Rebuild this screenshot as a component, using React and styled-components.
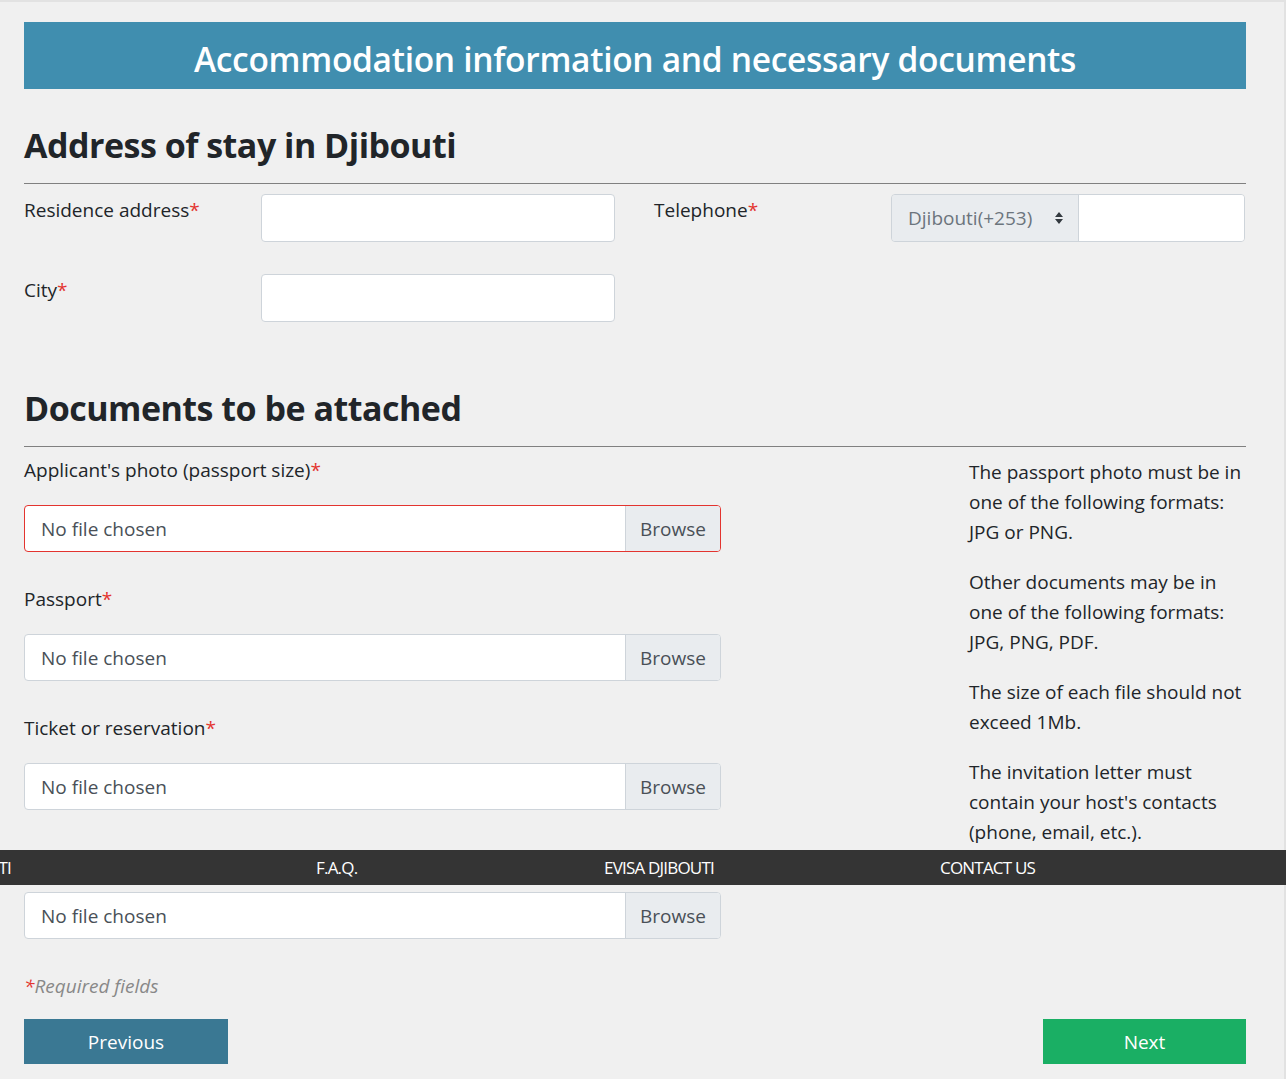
import React from "react";
import styled, { createGlobalStyle } from "styled-components";

const Global = createGlobalStyle`
  html, body { margin: 0; background: #f0f0f0; }
  body { font-family: "Open Sans", "Noto Sans", sans-serif; color: #212529; }
  * { box-sizing: border-box; }
`;

const Frame = styled.div`
  border-top: 2px solid #e2e2e2;
  border-right: 2px solid #e2e2e2;
  min-height: 1079px;
`;

const Page = styled.div`
  width: 1222px;
  margin-left: 24px;
  padding-top: 20px;
  padding-bottom: 18px;
`;

const Banner = styled.h1`
  margin: 0;
  height: 67px;
  background: #408eaf;
  color: #fff;
  font-size: 33.5px;
  font-weight: 600;
  display: flex;
  align-items: center;
  justify-content: center;
  letter-spacing: -0.3px;
  padding-top: 6px;
`;

const SectionTitle = styled.h2`
  margin: ${({ $top }) => $top}px 0 0;
  font-size: 34px;
  font-weight: 700;
  padding-bottom: 15px;
  border-bottom: 1px solid #808080;
  letter-spacing: -0.5px;
`;

const AddressGrid = styled.div`
  display: grid;
  grid-template-columns: 237px 354px 39px 237px 354px;
  row-gap: 32px;
  padding-top: 10px;
`;

const Label = styled.label`
  font-size: 19px;
  padding-top: ${({ $plain }) => ($plain ? 0 : 3)}px;
`;

const Star = styled.span`
  color: #e3342f;
`;

const TextInput = styled.div`
  height: 48px;
  background: #fff;
  border: 1px solid #ced4da;
  border-radius: 4px;
`;

const PhoneGroup = styled.div`
  display: flex;
  height: 48px;
  border: 1px solid #ced4da;
  border-radius: 4px;
  overflow: hidden;
`;

const CountrySelect = styled.div`
  width: 187px;
  background: #e9ecef;
  color: #6c757d;
  font-size: 19px;
  display: flex;
  align-items: center;
  justify-content: space-between;
  padding: 0 14px 0 16px;
  border-right: 1px solid #ced4da;
`;

const PhoneInput = styled.div`
  flex: 1;
  background: #fff;
`;

const DocsGrid = styled.div`
  display: grid;
  grid-template-columns: 697px 1fr 277px;
  padding-top: 10px;
`;

const FileList = styled.div`
  display: flex;
  flex-direction: column;
`;

const FileBlock = styled.div`
  display: flex;
  flex-direction: column;
  gap: 22px;
  margin-bottom: 34px;
`;

const FileInput = styled.div`
  display: flex;
  height: 47px;
  background: #fff;
  border: 1px solid ${({ $invalid }) => ($invalid ? "#e3342f" : "#ced4da")};
  border-radius: 4px;
  overflow: hidden;
  font-size: 19px;
`;

const FileName = styled.div`
  flex: 1;
  display: flex;
  align-items: center;
  padding-left: 16px;
  color: #495057;
`;

const Browse = styled.div`
  width: 95px;
  display: flex;
  align-items: center;
  justify-content: center;
  background: #e9ecef;
  color: #495057;
  border-left: 1px solid #ced4da;
`;

const Notes = styled.div`
  font-size: 19px;
  line-height: 30px;
  color: #212529;
  p { margin: 0 0 20px; }
`;

const Required = styled.div`
  font-style: italic;
  color: #888;
  font-size: 19px;
`;

const Actions = styled.div`
  display: flex;
  justify-content: space-between;
  margin-top: 20px;
`;

const Button = styled.button`
  width: ${({ $w }) => $w}px;
  height: 45px;
  border: none;
  color: #fff;
  font-family: inherit;
  font-size: 19px;
  background: ${({ $next }) => ($next ? "#1aaf64" : "#3a7893")};
`;

const FooterBar = styled.nav`
  position: fixed;
  left: 0;
  right: 0;
  top: 850px;
  height: 35px;
  background: #343434;
  color: #fff;
  font-size: 17px;
  letter-spacing: -0.8px;
  display: flex;
  align-items: center;
  overflow: hidden;
`;

const FooterLink = styled.span`
  position: absolute;
  left: ${({ $x }) => $x}px;
`;

const Sort = () => (
  <svg width="10" height="16" viewBox="0 0 10 16">
    <path d="M5 2 L9 7 H1 Z M5 14 L9 9 H1 Z" fill="#343a40" />
  </svg>
);

const files = [
  { label: "Applicant's photo (passport size)", invalid: true },
  { label: "Passport" },
  { label: "Ticket or reservation" },
  { label: "Hotel Booking or invitation letter" },
];

export default function App() {
  return (
    <Frame>
      <Global />
      <Page>
        <Banner>Accommodation information and necessary documents</Banner>
        <SectionTitle $top={33}>Address of stay in Djibouti</SectionTitle>
        <AddressGrid>
          <Label>Residence address<Star>*</Star></Label>
          <TextInput />
          <div />
          <Label>Telephone<Star>*</Star></Label>
          <PhoneGroup>
            <CountrySelect>Djibouti(+253) <Sort /></CountrySelect>
            <PhoneInput />
          </PhoneGroup>
          <Label>City<Star>*</Star></Label>
          <TextInput />
        </AddressGrid>
        <SectionTitle $top={63}>Documents to be attached</SectionTitle>
        <DocsGrid>
          <FileList>
            {files.map((f) => (
              <FileBlock key={f.label}>
                <Label $plain>{f.label}<Star>*</Star></Label>
                <FileInput $invalid={f.invalid}>
                  <FileName>No file chosen</FileName>
                  <Browse>Browse</Browse>
                </FileInput>
              </FileBlock>
            ))}
            <Required><Star>*</Star>Required fields</Required>
          </FileList>
          <div />
          <Notes>
            <p>The passport photo must be in one of the following formats: JPG or PNG.</p>
            <p>Other documents may be in one of the following formats: JPG, PNG, PDF.</p>
            <p>The size of each file should not exceed 1Mb.</p>
            <p>The invitation letter must contain your host's contacts (phone, email, etc.).</p>
          </Notes>
        </DocsGrid>
        <Actions>
          <Button $w={204}>Previous</Button>
          <Button $w={203} $next>Next</Button>
        </Actions>
      </Page>
      <FooterBar>
        <FooterLink $x={-55}>DJIBOUTI</FooterLink>
        <FooterLink $x={316}>F.A.Q.</FooterLink>
        <FooterLink $x={604}>EVISA DJIBOUTI</FooterLink>
        <FooterLink $x={940}>CONTACT US</FooterLink>
      </FooterBar>
    </Frame>
  );
}
